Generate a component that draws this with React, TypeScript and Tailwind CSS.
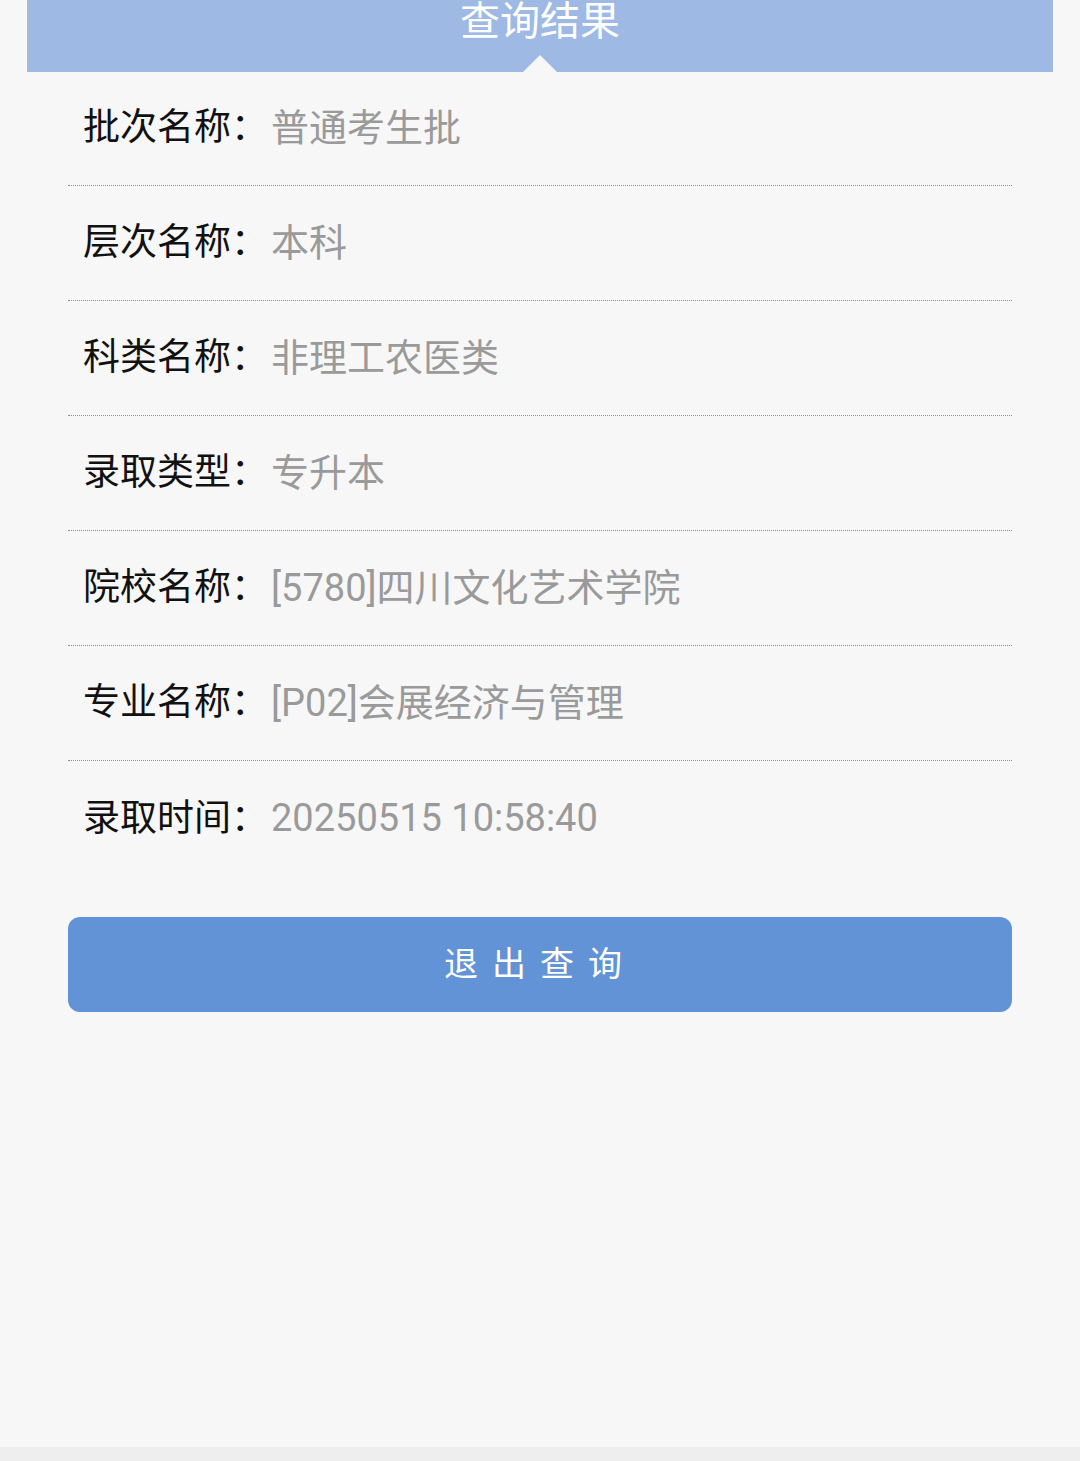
const rows = [
  { label: "批次名称", value: "普通考生批" },
  { label: "层次名称", value: "本科" },
  { label: "科类名称", value: "非理工农医类" },
  { label: "录取类型", value: "专升本" },
  { label: "院校名称", value: "[5780]四川文化艺术学院" },
  { label: "专业名称", value: "[P02]会展经济与管理" },
  { label: "录取时间", value: "20250515 10:58:40" },
];

export default function App() {
  return (
    <div
      className="flex h-[1461px] w-[1080px] flex-col bg-[#f7f7f7]"
      style={{ fontFamily: 'Roboto, "Noto Sans CJK SC", sans-serif' }}
    >
      <div className="flex-1">
        {/* Header */}
        <div className="relative mx-[27px] flex h-[72px] justify-center bg-[#9db9e4]">
          <h1 className="pt-[2px] text-[40px] leading-[40px] text-white">查询结果</h1>
          <div className="absolute bottom-0 left-1/2 h-0 w-0 -translate-x-1/2 border-b-[17px] border-l-[17px] border-r-[17px] border-b-[#f7f7f7] border-l-transparent border-r-transparent" />
        </div>

        {/* Result rows */}
        <div className="mx-[68px] -mt-px">
          {rows.map((row, i) => (
            <div
              key={row.label}
              className={
                "flex h-[115px] items-center pl-[15px] " +
                (i < rows.length - 1 ? "border-b border-dotted border-[#8f8f8f]" : "")
              }
            >
              <span className="text-[37px] text-[#111]">{row.label}：</span>
              <span className="ml-[3px] text-[38px] text-[#9a9a9a]">{row.value}</span>
            </div>
          ))}
        </div>

        {/* Exit button */}
        <div className="mx-[68px] mt-[41px]">
          <button className="flex h-[95px] w-full items-center justify-center rounded-[12px] bg-[#6193d6] text-[34px] tracking-[14px] text-white">
            退出查询
          </button>
        </div>
      </div>
      <div className="h-[14px] bg-[#eeeeee]" />
    </div>
  );
}
